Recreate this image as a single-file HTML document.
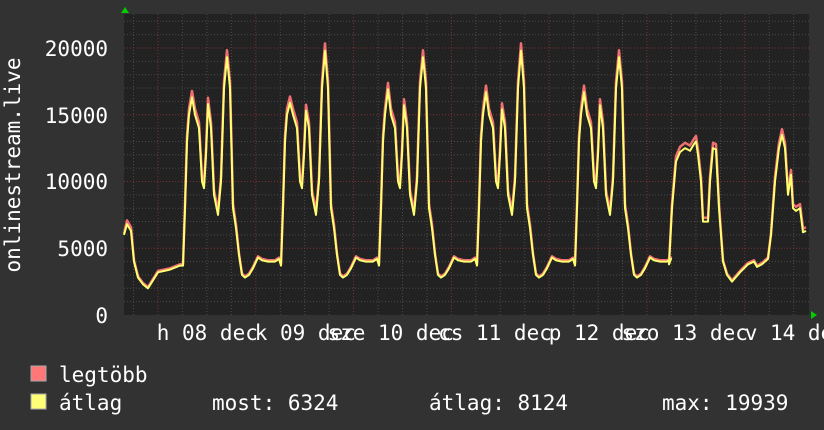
<!DOCTYPE html>
<html><head><meta charset="utf-8"><style>
html,body{margin:0;padding:0;background:#323232;}
body{width:824px;height:430px;overflow:hidden;position:relative;}
svg{position:absolute;left:0;top:0;}
text{font-family:"DejaVu Sans Mono","Liberation Mono",monospace;fill:#fff;font-size:21px;}
</style></head><body>
<svg id="s" width="824" height="430" viewBox="0 0 824 430">
<rect x="0" y="0" width="824" height="430" fill="#323232"/>
<rect x="124" y="14" width="685" height="301" fill="#222"/>
<g id="grid"></g>
<polyline id="red" fill="none" stroke="#f07070" stroke-width="2.5" stroke-linejoin="round"/>
<polyline id="yel" fill="none" stroke="#ffff70" stroke-width="2" stroke-linejoin="round"/>
<polygon points="121,13 129,13 125,7" fill="#00cc00"/>
<polygon points="811,311 811,319 817,315" fill="#00cc00"/>
<g text-anchor="end">
<text x="108" y="56">20000</text>
<text x="108" y="123">15000</text>
<text x="108" y="189">10000</text>
<text x="108" y="256">5000</text>
<text x="108" y="323">0</text>
</g>
<text transform="translate(20,165) rotate(-90)" text-anchor="middle">onlinestream.live</text>
<g id="xl"></g>
<rect x="31" y="366" width="15" height="15" fill="#ff7777" stroke="#aaa" stroke-width="1"/>
<rect x="31" y="394" width="15" height="15" fill="#ffff77" stroke="#aaa" stroke-width="1"/>
<text x="59" y="382">legtöbb</text>
<text x="59" y="410">átlag</text>
<text x="212" y="410">most: 6324</text>
<text x="429" y="410">átlag: 8124</text>
<text x="662" y="410">max: 19939</text>
</svg>
<script>
var NS="http://www.w3.org/2000/svg";
function el(t,a,p){var e=document.createElementNS(NS,t);for(var k in a)e.setAttribute(k,a[k]);p.appendChild(e);return e;}
var g=document.getElementById('grid');
function Y(v){return 315-v*267/20000;}
for(var v=1000;v<=22000;v+=1000){var y=Y(v);if(y<14)break;
 el('line',{x1:124,x2:809,y1:y,y2:y,stroke:v%5000==0?'#803030':'#4a4a4a','stroke-dasharray':'1,2','stroke-width':1},g);}
for(var i=-2;i<30;i++){var x=158+i*24.45;if(x<125||x>808)continue;
 el('line',{x1:x,x2:x,y1:14,y2:315,stroke:(i%4==0)?'#803030':'#4a4a4a','stroke-dasharray':'1,2','stroke-width':1},g);}
var pts=[[124,6000],[127,6800],[131,6300],[134,4000],[138,2800],[143,2300],[148,2000],[153,2600],[158,3200],[170,3400],[180,3700]];
var T=[[0,3700],[2,8000],[4,13000],[6,15000],[9,1],[12,15000],[16,14000],[19,10000],[21,9500],[23,12000],[25,2],[28,14000],[31,9000],[35,7500],[38,10000],[41,17000],[44,3],[47,17000],[50,8000],[53,6500],[56,4500],[59,3000],[62,2800],[66,3000],[70,3500],[75,4300],[79,4100],[85,4000],[92,4000],[96,4200]];
var days=[[183,16300,15800,19300],[281,15900,15300,19800],[379,16900,15700,19300],[477,16700,15400,19800],[575,16700,15700,19300]];
days.forEach(function(d){T.forEach(function(t){var v=t[1];if(v==1)v=d[1];if(v==2)v=d[2];if(v==3)v=d[3];pts.push([d[0]+t[0],v]);});});
pts=pts.concat([[669,3800],[672,8000],[676,11500],[680,12200],[685,12500],[690,12300],[694,12800],[696,13000],[698,12000],[701,10000],[703,7000],[708,7000],[710,10000],[713,12500],[716,12400],[719,8000],[723,4000],[727,3000],[732,2500],[740,3200],[748,3800],[754,4000],[757,3600],[762,3800],[768,4200],[771,6000],[775,10000],[779,12500],[782,13500],[785,12500],[788,9000],[791,10500],[793,8000],[796,7800],[800,8000],[803,6200],[806,6300]]);
var ys=pts.map(function(p){return p[0]+','+Y(p[1]).toFixed(1);}).join(' ');
var rs=pts.map(function(p){var v=p[1];v=v>6000?v*1.02+150:v+100;return p[0]+','+Y(v).toFixed(1);}).join(' ');
document.getElementById('yel').setAttribute('points',ys);
document.getElementById('red').setAttribute('points',rs);
var xl=document.getElementById('xl');
var labs=[['h',182,'08'],['k',280,'09'],['sze',378,'10'],['cs',476,'11'],['p',574,'12'],['szo',672,'13'],['v',770,'14']];
labs.forEach(function(l){
 var t=el('text',{x:l[1],y:340},xl);t.textContent=l[2]+' dec';
 var p=el('text',{x:l[1]-12.6,y:340,'text-anchor':'end'},xl);p.textContent=l[0];
});
</script>
</body></html>
